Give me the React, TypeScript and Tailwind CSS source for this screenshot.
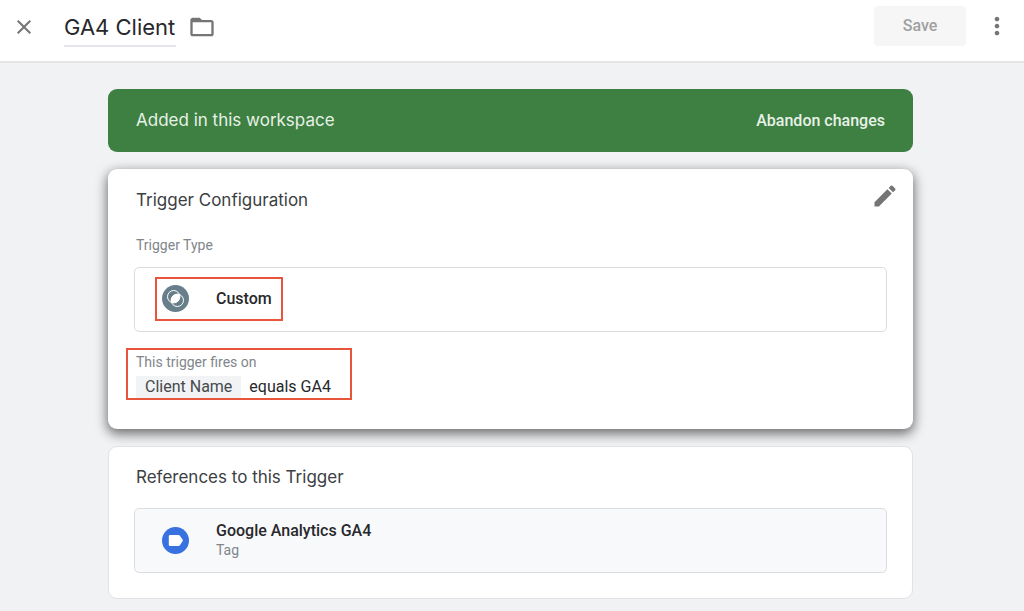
import type { ReactNode } from "react";
import { MdClose, MdEdit, MdFolderOpen, MdMoreVert } from "react-icons/md";

const Heading = ({ children }: { children: ReactNode }) => (
  <h2 className="text-[17px] leading-6 font-['Inter',sans-serif] text-[#3c4043]">
    {children}
  </h2>
);

const CustomIcon = () => (
  <svg viewBox="0 0 27 27" className="size-[27px] shrink-0" aria-hidden="true">
    <circle cx="13.5" cy="13.5" r="13.5" fill="#687e8b" />
    <g fill="none" stroke="#fff" strokeWidth="1">
      <circle cx="11.7" cy="11.7" r="6.2" />
      <circle cx="15.3" cy="15.3" r="6.2" />
    </g>
    <path d="M17.500 9.500A6.200 6.200 0 0 1 9.500 17.500A6.200 6.200 0 0 1 17.500 9.500z" fill="#fff" />
  </svg>
);

const TagIcon = () => (
  <svg viewBox="0 0 27 27" className="size-[27px] shrink-0" aria-hidden="true">
    <circle cx="13.5" cy="13.5" r="13.5" fill="#3871e0" />
    <path
      d="M8 8h8.600q.8 0 1.300.700l2.800 4.100q.4.600 0 1.200l-2.800 4.300q-.5.700-1.300.700H8q-1.200 0-1.200-1.200V9.200Q6.800 8 8 8z"
      fill="#fff"
    />
  </svg>
);

const Header = () => {
  return (
    <header className="flex h-[63px] items-start border-b-2 border-[#e4e5e7] bg-white pl-3 pr-[13px] text-[#757575]">
      <button type="button" aria-label="Close" className="mt-[15px]">
        <MdClose size={24} />
      </button>
      <input
        type="text"
        aria-label="Trigger name"
        defaultValue="GA4 Client"
        className="ml-7 mt-2 h-[39px] w-[112px] border-b-2 border-[#e4e5ea] font-['Inter',sans-serif] text-[22px] text-[#27282b] outline-none"
      />
      <button type="button" aria-label="Move to folder" className="ml-3 mt-[13px]">
        <MdFolderOpen size={28} />
      </button>
      <button
        type="button"
        disabled
        className="ml-auto mt-[6px] h-10 w-[92px] rounded bg-[#f6f6f6] text-[16px] font-medium text-[#a0a0a0]"
      >
        Save
      </button>
      <button type="button" aria-label="More options" className="ml-[17px] mt-3">
        <MdMoreVert size={28} />
      </button>
    </header>
  );
};

const App = () => {
  return (
    <div className="min-h-screen bg-[#f1f2f4] font-['Roboto',sans-serif] text-[#27282b]">
      <Header />
      <main className="flex flex-col gap-[17px] pb-3 pl-[108px] pr-[111px] pt-[26px]">
        <section className="flex h-[63px] items-center justify-between rounded-[9px] bg-[#3d8041] px-7 text-[#e8f1e8]">
          <p className="font-['Inter',sans-serif] text-[17px]">
            Added in this workspace
          </p>
          <button type="button" className="text-[16px] font-medium">
            Abandon changes
          </button>
        </section>

        <section className="rounded-[9px] bg-white px-[26px] pb-[29px] pt-[19px] shadow-[0_4px_12px_1px_rgba(0,0,0,0.55)]">
          <div className="flex items-center justify-between pl-[2px]">
            <Heading>Trigger Configuration</Heading>
            <button
              type="button"
              aria-label="Edit configuration"
              className="-mr-3 -mt-2 text-[#757575]"
            >
              <MdEdit size={28} />
            </button>
          </div>
          <p className="mt-[23px] pl-[2px] text-[14px] leading-5 text-[#80868b]">
            Trigger Type
          </p>
          <div className="mt-3 flex h-[65px] items-center rounded-[5px] border border-[#dadce0] pb-[2px] pl-5">
            <div className="flex h-11 items-center gap-[27px] border-2 border-[#e8543c] pl-[5px] pr-[9px]">
              <CustomIcon />
              <span className="text-[16px] leading-5 font-medium">Custom</span>
            </div>
          </div>
          <div className="-ml-2 mt-4 h-[52px] w-[226px] border-2 border-[#e8543c] pl-2 pt-[2px]">
            <p className="text-[14px] leading-5 text-[#80868b]">
              This trigger fires on
            </p>
            <p className="mt-1 flex items-center gap-2 text-[16px] leading-[22px]">
              <span className="bg-[#f1f3f4] px-[9px] text-[#46494d]">
                Client Name
              </span>
              <span>equals GA4</span>
            </p>
          </div>
        </section>

        <section className="rounded-[9px] border border-[#e0e2e6] bg-white px-[25px] pb-[25px] pt-[18px]">
          <div className="pl-[2px]">
            <Heading>References to this Trigger</Heading>
          </div>
          <a
            href="#tag"
            className="mt-[19px] flex h-[65px] items-center gap-[27px] rounded-[5px] border border-[#dadce0] bg-[#f8f9fb] pl-[27px]"
          >
            <TagIcon />
            <span className="flex flex-col pb-[2px]">
              <span className="text-[16px] leading-5 font-medium">
                Google Analytics GA4
              </span>
              <span className="text-[14px] leading-[18px] text-[#80868b]">
                Tag
              </span>
            </span>
          </a>
        </section>
      </main>
    </div>
  );
};

export default App;
